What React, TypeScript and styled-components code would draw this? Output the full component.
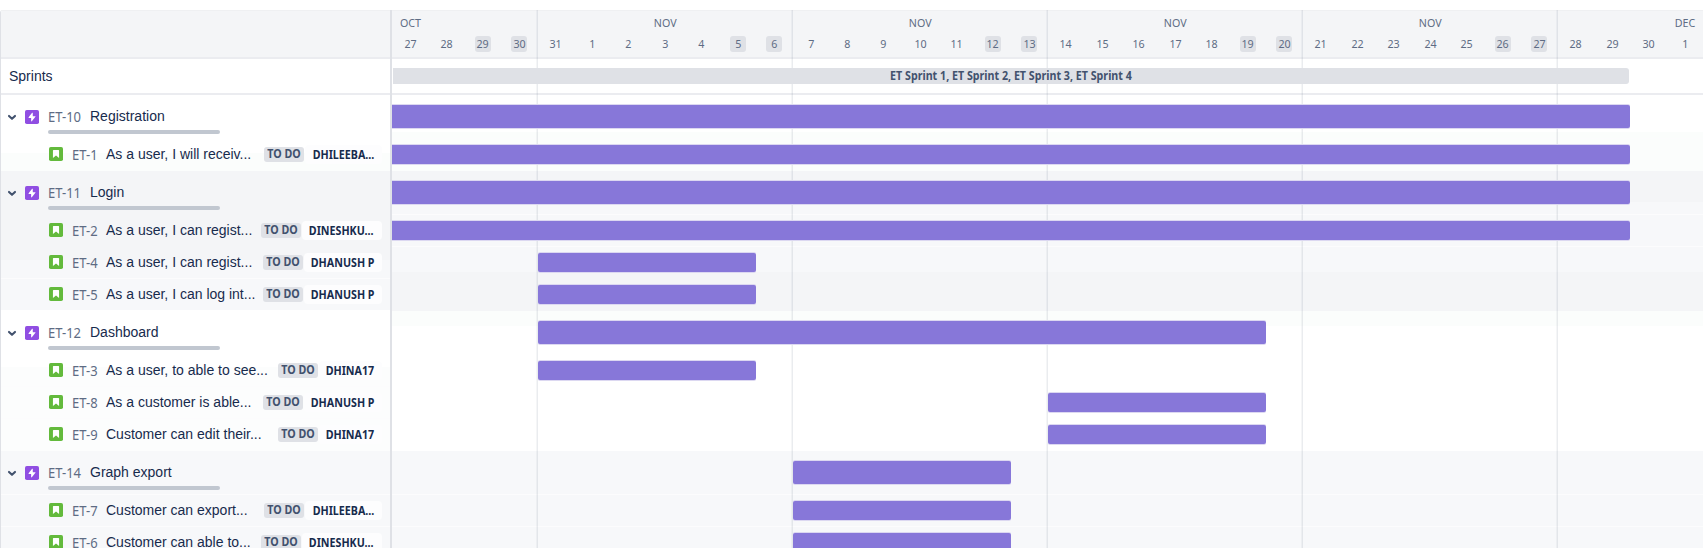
import React from "react";
import styled, { createGlobalStyle } from "styled-components";

const Global = createGlobalStyle`
  *, *::before, *::after { box-sizing: border-box; }
  html, body, #root { margin: 0; height: 100%; }
  body { background: #fff; overflow: hidden; font-family: "Noto Sans", sans-serif; color: #172b4d; }
`;

const DAY = 255 / 7;

const Roadmap = styled.main`
  display: grid;
  grid-template-columns: 392px 1fr;
  height: 538px;
  margin-top: 10px;
  overflow: hidden;
`;

const Sidebar = styled.section`
  display: flex;
  flex-direction: column;
  border-left: 1px solid #dfe1e6;
  border-right: 2px solid #dfe1e6;
  border-top-left-radius: 3px;
  overflow: hidden;
`;

const HeaderCell = styled.div`
  flex: none;
  height: 49px;
  background: #f4f5f7;
  border-top: 1px solid #eff0f2;
  border-bottom: 2px solid #ebecf0;
`;

const SprintCell = styled.div`
  flex: none;
  display: flex;
  align-items: center;
  height: 36px;
  border-bottom: 2px solid #ebecf0;
`;

const SprintTitle = styled(SprintCell)`
  padding-left: 8px;
  font: 14px "Liberation Sans", sans-serif;
`;

/* Slightly narrowed label text. */
const Narrow = styled.span<{ $origin?: string }>`
  display: inline-block;
  white-space: nowrap;
  transform: scaleX(0.93);
  transform-origin: ${(p) => p.$origin || "center"};
`;

const Tree = styled.div`
  flex: 1;
  background: linear-gradient(
    #fff 0 58px, #fbfdfc 58px 76px, #f4f5f7 76px 165px, #f7f8fa 165px 215px,
    #fff 215px 272px, #fcfdfd 272px 356px, #f7f8fa 356px
  );
`;

const EpicRow = styled.div<{ $line?: boolean }>`
  height: 44px;
  padding: 12px 0 0 5px;
  border-bottom: 1px solid ${(p) => (p.$line ? "#fcfcfd" : "transparent")};
`;

const EpicLine = styled.div`
  display: flex;
  align-items: center;
  height: 19px;
`;

const IconSlot = styled.span<{ $gap: number }>`
  display: flex;
  flex: none;
  margin-right: ${(p) => p.$gap}px;
`;

const Key = styled.span<{ $width: number }>`
  flex: none;
  width: ${(p) => p.$width}px;
  padding-top: 1px;
  font-size: 14px;
  line-height: 18px;
  color: #5e6c84;
`;

const Summary = styled.span`
  height: 20px;
  font: 14px/18px "Liberation Sans", sans-serif;
  white-space: nowrap;
`;

const StorySummary = styled(Summary)`
  line-height: 20px;
`;

const Progress = styled.div`
  width: 172px;
  height: 4px;
  margin: 3.5px 0 0 42px;
  border-radius: 2px;
  background: #c1c7d0;
`;

const StoryRow = styled.div<{ $line?: boolean }>`
  display: flex;
  align-items: center;
  height: 32px;
  padding: 0 8px 1px 48px;
  border-bottom: 1px solid ${(p) => (p.$line ? "#fcfcfd" : "transparent")};
`;

const Status = styled.span`
  flex: none;
  width: 40px;
  height: 15px;
  margin-left: auto;
  border-radius: 3px;
  background: #dfe1e6;
  color: #42526e;
  font-size: 11.5px;
  font-weight: 700;
  line-height: 14px;
  text-align: center;
`;

const Assignee = styled.span<{ $width: number }>`
  flex: none;
  width: ${(p) => p.$width}px;
  height: 19px;
  margin-left: 1px;
  padding-right: 8px;
  border-radius: 4px;
  background: #fdfdfe;
  font-size: 11.5px;
  font-weight: 700;
  line-height: 20px;
  display: flex;
  justify-content: flex-end;
`;

const Timeline = styled.section`
  position: relative;
  display: flex;
  flex-direction: column;
  overflow: hidden;
`;

const Weeks = styled(HeaderCell)`
  display: flex;
`;

const Week = styled.div<{ $days: number }>`
  flex: none;
  width: ${(p) => p.$days * DAY}px;
  color: #5e6c84;
  font-size: 11.5px;
`;

const Month = styled.div<{ $align?: string }>`
  height: 23px;
  padding-top: 4px;
  padding-left: ${(p) => (p.$align === "left" ? 8 : 0)}px;
  margin-left: ${(p) => (p.$align === "last" ? 3 * DAY : 0)}px;
  line-height: 16px;
  text-align: ${(p) => (p.$align === "left" ? "left" : "center")};
`;

const Days = styled.div`
  display: flex;
`;

const Day = styled.div`
  display: flex;
  justify-content: center;
  width: ${DAY}px;
`;

const DayNumber = styled.span<{ $off: boolean }>`
  display: flex;
  justify-content: center;
  width: 16px;
  height: 16px;
  margin-top: 2px;
  border-radius: 3px;
  background: ${(p) => (p.$off ? "#dfe1e6" : "transparent")};
  line-height: 16px;
`;

const SprintBar = styled.div`
  position: relative;
  z-index: 1;
  width: 1236px;
  height: 16px;
  margin-left: 1px;
  border-radius: 0 3px 3px 0;
  background: #dfe1e6;
  color: #42526e;
  font-size: 11.5px;
  font-weight: 700;
  line-height: 16px;
  text-align: center;
`;

const Chart = styled.div`
  flex: 1;
  background: linear-gradient(
    #fff 0 37px, #fbfdfc 37px 76px, #f4f5f7 76px 107px, #f7f8fa 107px 177px,
    #f4f5f7 177px 216px, #fbfdfc 216px 231px, #fff 231px 356px, #f7f8fa 356px
  );
`;

const Track = styled.div<{ $epic?: boolean; $line?: boolean }>`
  display: flex;
  height: ${(p) => (p.$epic ? 44 : 32)}px;
  padding-top: ${(p) => (p.$epic ? 10 : 6)}px;
  border-bottom: 1px solid ${(p) => (p.$line ? "#fcfcfd" : "transparent")};
`;

const Bar = styled.div<{ $epic?: boolean; $from: number; $width: number }>`
  position: relative;
  z-index: 1;
  width: ${(p) => p.$width}px;
  height: ${(p) => (p.$epic ? 23 : 19)}px;
  margin-left: ${(p) => p.$from}px;
  border-radius: ${(p) => (p.$from ? "2px" : "0 2px 2px 0")};
  background: #8777d9;
  box-shadow: 0 1px 0 #dcd8f1, 0 -1px 0 #dcd8f1;
`;

const WeekLine = styled.div<{ $x: number }>`
  position: absolute;
  top: 0;
  bottom: 0;
  left: ${(p) => p.$x}px;
  width: 2px;
  border-left: 1px solid rgba(9, 30, 66, 0.04);
  border-right: 1px solid rgba(9, 30, 66, 0.08);
`;

const Chevron = () => (
  <svg width="12" height="12" viewBox="0 0 12 12" fill="none">
    <path d="M3 4.9 6 7.8 9 4.9" stroke="#42526e" strokeWidth="2.1" strokeLinecap="round" strokeLinejoin="round" />
  </svg>
);

const EpicIcon = () => (
  <svg width="14" height="14" viewBox="0 0 16 16">
    <rect width="16" height="16" rx="2" fill="#904ee2" />
    <path d="M12 7.5 11.8 7.1 11.6 7H8.9V3.5L8.6 3 8.1 3.1 4.1 8.2 4 8.6 4.4 9H7V12.5L7.3 13 7.8 12.9 11.9 7.8Z" fill="#fff" />
  </svg>
);

const StoryIcon = () => (
  <svg width="14" height="14" viewBox="0 0 16 16">
    <rect width="16" height="16" rx="2" fill="#63ba3c" />
    <path d="M5 3.5H11Q11.5 3.5 11.5 4V12.6L8 9.8 4.5 12.6V4Q4.5 3.5 5 3.5Z" fill="#fff" />
  </svg>
);

type Item = {
  id: string;
  title: string;
  from: number;
  width: number;
  who?: string;
  whoWidth?: number;
  line?: boolean;
  trackLine?: boolean;
};

const items: Item[] = [
  { id: "ET-10", title: "Registration", from: 0, width: 1238, trackLine: true },
  { id: "ET-1", title: "As a user, I will receiv...", from: 0, width: 1238, who: "DHILEEBA...", whoWidth: 77 },
  { id: "ET-11", title: "Login", from: 0, width: 1238, trackLine: true },
  { id: "ET-2", title: "As a user, I can regist...", from: 0, width: 1238, who: "DINESHKU...", whoWidth: 80, trackLine: true },
  { id: "ET-4", title: "As a user, I can regist...", from: 146, width: 218, who: "DHANUSH P", whoWidth: 78, line: true },
  { id: "ET-5", title: "As a user, I can log int...", from: 146, width: 218, who: "DHANUSH P", whoWidth: 78 },
  { id: "ET-12", title: "Dashboard", from: 146, width: 728 },
  { id: "ET-3", title: "As a user, to able to see...", from: 146, width: 218, who: "DHINA17", whoWidth: 63, line: true },
  { id: "ET-8", title: "As a customer is able...", from: 656, width: 218, who: "DHANUSH P", whoWidth: 78, line: true },
  { id: "ET-9", title: "Customer can edit their...", from: 656, width: 218, who: "DHINA17", whoWidth: 63 },
  { id: "ET-14", title: "Graph export", from: 401, width: 218, line: true, trackLine: true },
  { id: "ET-7", title: "Customer can export...", from: 401, width: 218, who: "DHILEEBA...", whoWidth: 77, line: true, trackLine: true },
  { id: "ET-6", title: "Customer can able to...", from: 401, width: 218, who: "DINESHKU...", whoWidth: 80 },
];

const weeks = [
  { month: "OCT", align: "left", days: [27, 28, 29, 30], off: [29, 30] },
  { month: "NOV", days: [31, 1, 2, 3, 4, 5, 6], off: [5, 6] },
  { month: "NOV", days: [7, 8, 9, 10, 11, 12, 13], off: [12, 13] },
  { month: "NOV", days: [14, 15, 16, 17, 18, 19, 20], off: [19, 20] },
  { month: "NOV", days: [21, 22, 23, 24, 25, 26, 27], off: [26, 27] },
  { month: "DEC", align: "last", days: [28, 29, 30, 1], off: [] as number[] },
];

export default function App() {
  return (
    <>
      <Global />
      <Roadmap>
        <Sidebar>
          <HeaderCell />
          <SprintTitle>Sprints</SprintTitle>
          <Tree>
            {items.map((it) =>
              it.who ? (
                <StoryRow key={it.id} $line={it.line}>
                  <IconSlot $gap={9}><StoryIcon /></IconSlot>
                  <Key $width={34}><Narrow $origin="left">{it.id}</Narrow></Key>
                  <StorySummary>{it.title}</StorySummary>
                  <Status><Narrow>TO DO</Narrow></Status>
                  <Assignee $width={it.whoWidth!}><Narrow $origin="right">{it.who}</Narrow></Assignee>
                </StoryRow>
              ) : (
                <EpicRow key={it.id} $line={it.line}>
                  <EpicLine>
                    <IconSlot $gap={7}><Chevron /></IconSlot>
                    <IconSlot $gap={9}><EpicIcon /></IconSlot>
                    <Key $width={42}><Narrow $origin="left">{it.id}</Narrow></Key>
                    <Summary>{it.title}</Summary>
                  </EpicLine>
                  <Progress />
                </EpicRow>
              )
            )}
          </Tree>
        </Sidebar>
        <Timeline>
          <Weeks>
            {weeks.map((w, i) => (
              <Week key={i} $days={w.days.length}>
                <Month $align={w.align}><Narrow $origin={w.align === "left" ? "left" : "center"}>{w.month}</Narrow></Month>
                <Days>
                  {w.days.map((d) => (
                    <Day key={d}>
                      <DayNumber $off={w.off.includes(d)}><Narrow>{d}</Narrow></DayNumber>
                    </Day>
                  ))}
                </Days>
              </Week>
            ))}
          </Weeks>
          <SprintCell>
            <SprintBar><Narrow>ET Sprint 1, ET Sprint 2, ET Sprint 3, ET Sprint 4</Narrow></SprintBar>
          </SprintCell>
          <Chart>
            {items.map((it) => (
              <Track key={it.id} $epic={!it.who} $line={it.trackLine}>
                <Bar $epic={!it.who} $from={it.from} $width={it.width} />
              </Track>
            ))}
          </Chart>
          {[144, 399, 654, 909, 1164].map((x) => (
            <WeekLine key={x} $x={x} />
          ))}
        </Timeline>
      </Roadmap>
    </>
  );
}
